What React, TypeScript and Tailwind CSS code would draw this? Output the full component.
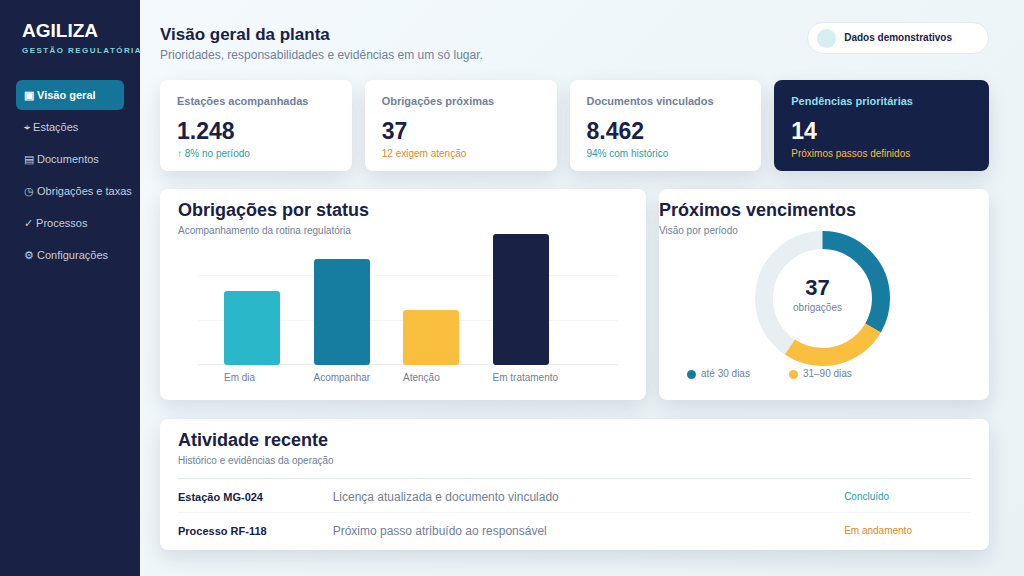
interface NavItem {
  icon: string
  label: string
  active?: boolean
}

interface Stat {
  label: string
  value: string
  note: string
  noteClass: string
  dark?: boolean
}

const navItems: NavItem[] = [
  { icon: '▣', label: 'Visão geral', active: true },
  { icon: '⌖', label: 'Estações' },
  { icon: '▤', label: 'Documentos' },
  { icon: '◷', label: 'Obrigações e taxas' },
  { icon: '✓', label: 'Processos' },
  { icon: '⚙', label: 'Configurações' },
]

const stats: Stat[] = [
  { label: 'Estações acompanhadas', value: '1.248', note: '↑ 8% no período', noteClass: 'text-[#2a9d9f]' },
  { label: 'Obrigações próximas', value: '37', note: '12 exigem atenção', noteClass: 'text-[#d98a1f]' },
  { label: 'Documentos vinculados', value: '8.462', note: '94% com histórico', noteClass: 'text-[#2a9d9f]' },
  { label: 'Pendências prioritárias', value: '14', note: 'Próximos passos definidos', noteClass: 'text-[#fbbf40]', dark: true },
]

const bars = [
  { label: 'Em dia', height: 74, color: 'bg-[#29b7c9]' },
  { label: 'Acompanhar', height: 106, color: 'bg-[#167da1]' },
  { label: 'Atenção', height: 55, color: 'bg-[#fbbf40]' },
  { label: 'Em tratamento', height: 131, color: 'bg-[#192144]' },
]

const legend = [
  { label: 'até 30 dias', color: 'bg-[#167da1]' },
  { label: '31–90 dias', color: 'bg-[#fbbf40]' },
]

const activity = [
  { id: 'Estação MG-024', text: 'Licença atualizada e documento vinculado', status: 'Concluído', statusClass: 'text-[#2a9d9f]' },
  { id: 'Processo RF-118', text: 'Próximo passo atribuído ao responsável', status: 'Em andamento', statusClass: 'text-[#d98a1f]' },
]

const Sidebar = () => (
  <aside className="relative z-10 w-[140px] shrink-0 bg-[#192144] px-4 pt-5">
    <div className="h-[60px] whitespace-nowrap pl-[6px]">
      <div className="text-[19px] leading-[22px] font-bold text-white">AGILIZA</div>
      <div className="mt-1 text-[8px] leading-[10px] font-bold tracking-[0.18em] text-[#7fd3dd]">GESTÃO REGULATÓRIA</div>
    </div>
    <nav className="flex flex-col gap-[2px]">
      {navItems.map((item) => (
        <a
          key={item.label}
          href="#"
          className={`flex h-[30px] items-center whitespace-nowrap rounded-md pl-2 text-[11px] leading-4 ${
            item.active ? 'bg-[#147598] font-bold text-white' : 'text-[#c3cddd]'
          }`}
        >
          {item.icon} {item.label}
        </a>
      ))}
    </nav>
  </aside>
)

const StatCard = ({ stat }: { stat: Stat }) => (
  <div
    className={`rounded-lg px-[17px] pt-[13px] pb-[9px] shadow-[0_8px_20px_rgba(26,33,68,0.12)] ${
      stat.dark ? 'bg-[#152146]' : 'bg-white'
    }`}
  >
    <div className={`text-[11px] leading-4 font-bold ${stat.dark ? 'text-[#8fdfe8]' : 'text-[#718096]'}`}>{stat.label}</div>
    <div className={`mt-2 text-[23px] leading-7 font-bold ${stat.dark ? 'text-white' : 'text-[#192144]'}`}>{stat.value}</div>
    <div className={`mt-px text-[10px] leading-4 ${stat.noteClass}`}>{stat.note}</div>
  </div>
)

const PanelHeading = ({ title, subtitle }: { title: string; subtitle: string }) => (
  <div>
    <h2 className="text-[18px] leading-6 font-bold text-[#192144]">{title}</h2>
    <p className="mt-px text-[10px] leading-4 text-[#718096]">{subtitle}</p>
  </div>
)

const StatusChart = () => (
  <div className="relative -mt-[5px] ml-5 mr-[10px]">
    <div className="absolute inset-x-0 top-[41px] flex h-[90px] flex-col justify-between">
      <div className="h-px bg-[#f4f6f8]" />
      <div className="h-px bg-[#f4f6f8]" />
      <div className="h-px bg-[#e6ecf0]" />
    </div>
    <div className="relative grid grid-cols-4 items-end pl-[26px] pr-9">
      {bars.map((bar) => (
        <div key={bar.label}>
          <div className={`w-14 rounded-[3px] ${bar.color}`} style={{ height: bar.height }} />
          <div className="mt-[5px] whitespace-nowrap text-[10px] leading-4 text-[#718096]">{bar.label}</div>
        </div>
      ))}
    </div>
  </div>
)

const Donut = () => (
  <div className="relative mx-auto -mt-2 w-[135px]">
    <svg viewBox="0 0 135 135" className="block w-full" fill="none" strokeWidth="18">
      <circle cx="67.5" cy="67.5" r="58.5" stroke="#e8eff3" />
      <g transform="rotate(-90 67.5 67.5)">
        <circle cx="67.5" cy="67.5" r="58.5" stroke="#167da1" pathLength="100" strokeDasharray="33.4 66.6" />
        <circle cx="67.5" cy="67.5" r="58.5" stroke="#fbbf40" pathLength="100" strokeDasharray="26 74" strokeDashoffset="-33.4" />
      </g>
    </svg>
    <div className="absolute inset-0 flex flex-col items-center justify-center pr-[10px] pb-[6px]">
      <span className="text-[22px] leading-6 font-bold text-[#192144]">37</span>
      <span className="text-[10px] leading-4 text-[#718096]">obrigações</span>
    </div>
  </div>
)

const App = () => {
  return (
    <div className="flex min-h-screen bg-linear-135 from-[#f5fafd] to-[#e8f2f5] font-['Liberation_Sans',Arial,sans-serif]">
      <Sidebar />
      <main className="min-w-0 flex-1 pt-[22px] pr-[35px] pb-[25px] pl-5">
        <header className="flex h-[58px] items-start justify-between">
          <div className="pt-[3px]">
            <h1 className="text-[17px] leading-5 font-bold text-[#192144]">Visão geral da planta</h1>
            <p className="text-[12px] leading-5 text-[#718096]">Prioridades, responsabilidades e evidências em um só lugar.</p>
          </div>
          <div className="flex h-8 items-center gap-2 rounded-full border border-[#e0eaef] bg-white pr-9 pl-[9px]">
            <span className="size-[19px] rounded-full bg-[#d8edf0]" />
            <span className="text-[10px] leading-4 font-bold text-[#192144]">Dados demonstrativos</span>
          </div>
        </header>

        <section className="grid grid-cols-[192fr_192fr_192fr_215fr] gap-[13px]">
          {stats.map((stat) => (
            <StatCard key={stat.label} stat={stat} />
          ))}
        </section>

        <div className="mt-[18px] grid grid-cols-[486fr_330fr] gap-[13px]">
          <section className="rounded-lg bg-white px-[18px] pt-[9px] pb-[14px] shadow-[0_8px_20px_rgba(26,33,68,0.12)]">
            <PanelHeading title="Obrigações por status" subtitle="Acompanhamento da rotina regulatória" />
            <StatusChart />
          </section>
          <section className="rounded-lg bg-white pt-[9px] pr-[3px] shadow-[0_8px_20px_rgba(26,33,68,0.12)]">
            <PanelHeading title="Próximos vencimentos" subtitle="Visão por período" />
            <Donut />
            <div className="flex gap-[39px] pl-7">
              {legend.map((item) => (
                <div key={item.label} className="flex items-center gap-[5px] text-[10px] leading-4 text-[#718096]">
                  <span className={`size-[9px] rounded-full ${item.color}`} />
                  {item.label}
                </div>
              ))}
            </div>
          </section>
        </div>

        <section className="mt-[19px] rounded-lg bg-white px-[18px] pt-[9px] pb-[3px] shadow-[0_8px_20px_rgba(26,33,68,0.12)]">
          <PanelHeading title="Atividade recente" subtitle="Histórico e evidências da operação" />
          <table className="mt-[9px] w-full table-fixed border-t border-[#e3eaef] text-left">
            <tbody>
              {activity.map((row) => (
                <tr key={row.id} className="h-[34px] border-b border-[#f3f5f7] last:border-b-0">
                  <th scope="row" className="w-[19.5%] pt-[2px] text-[11px] leading-4 font-bold text-[#192144]">{row.id}</th>
                  <td className="pt-[2px] text-[12px] leading-4 text-[#718096]">{row.text}</td>
                  <td className={`w-[16%] pt-[2px] text-[10px] leading-4 ${row.statusClass}`}>{row.status}</td>
                </tr>
              ))}
            </tbody>
          </table>
        </section>
      </main>
    </div>
  )
}

export default App
